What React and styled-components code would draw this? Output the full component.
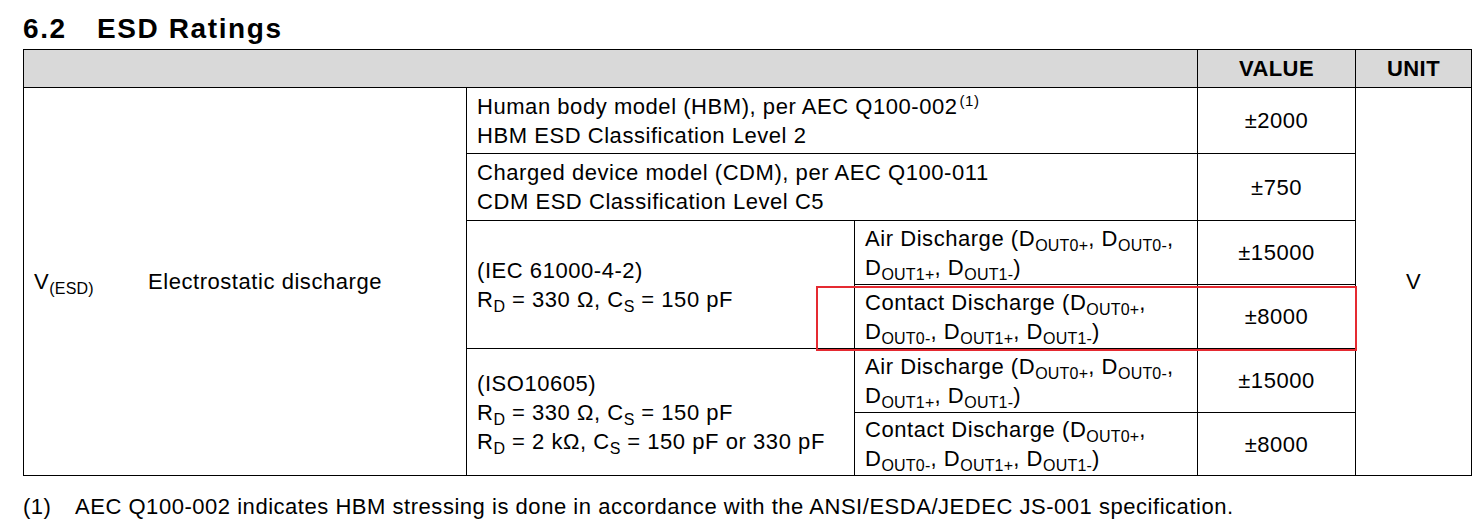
import React from 'react';
import styled, { createGlobalStyle } from 'styled-components';

const GlobalStyle = createGlobalStyle`
    body {
        margin: 0;
        background: #fff;
        color: #000;
        font-family: "Liberation Sans", Arial, sans-serif;
    }
`

const Page = styled.div`
    width: 1479px;
    padding: 13px 0 0 23px;
    box-sizing: border-box;
`

const Title = styled.h2`
    margin: 0 0 4px 0;
    font-size: 28px;
    line-height: 32px;
    font-weight: 700;
    letter-spacing: 1.6px;
`

const TitleNumber = styled.span`
    display: inline-block;
    width: 74px;
`

const TableWrap = styled.div`
    position: relative;
    width: 1448px;
`

const Table = styled.table`
    width: 1448px;
    border-collapse: collapse;
    table-layout: fixed;
    font-size: 22px;
    letter-spacing: 0.55px;
    line-height: 29px;
`

const HeadRow = styled.tr`
    height: 38px;
`

const Row = styled.tr`
    height: ${p => p.$h}px;
`

const Th = styled.th`
    background: #d9d9d9;
    border: 1px solid #000;
    font-size: 22px;
    letter-spacing: 0.4px;
    font-weight: 700;
    text-align: center;
    padding: 0;
`

const Td = styled.td`
    border: 1px solid #000;
    padding: 0 10px;
    vertical-align: middle;
    white-space: nowrap;
    text-align: ${p => (p.$center ? 'center' : 'left')};
`

const ParamCell = styled.div`
    display: flex;
    align-items: center;
`

const Symbol = styled.span`
    width: 114px;
`

const Sub = styled.sub`
    font-size: 16px;
    line-height: 0;
    vertical-align: -5px;
    letter-spacing: 0.2px;
`

const Sup = styled.sup`
    font-size: 15px;
    line-height: 0;
    vertical-align: 8px;
    margin-left: 2px;
`

const Highlight = styled.div`
    position: absolute;
    left: 793px;
    top: 237px;
    width: 541px;
    height: 65px;
    box-sizing: border-box;
    border: 2px solid #e52a31;
    pointer-events: none;
`

const Footnote = styled.p`
    margin: 18px 0 0 0;
    font-size: 22px;
    line-height: 26px;
    letter-spacing: 0.53px;
    display: flex;
`

const NoteMark = styled.span`
    width: 52px;
`

const D = ({ s }) => (
    <>D<Sub>{s}</Sub></>
);

const Air = () => (
    <>
        Air Discharge (<D s="OUT0+" />, <D s="OUT0-" />,<br />
        <D s="OUT1+" />, <D s="OUT1-" />)
    </>
);

const Contact = () => (
    <>
        Contact Discharge (<D s="OUT0+" />,<br />
        <D s="OUT0-" />, <D s="OUT1+" />, <D s="OUT1-" />)
    </>
);

const App = () => {
    return (
        <Page>
            <GlobalStyle />
            <Title><TitleNumber>6.2</TitleNumber>ESD Ratings</Title>
            <TableWrap>
                <Table>
                    <colgroup>
                        <col style={{ width: 443 }} />
                        <col style={{ width: 388 }} />
                        <col style={{ width: 343 }} />
                        <col style={{ width: 158 }} />
                        <col style={{ width: 116 }} />
                    </colgroup>
                    <thead>
                        <HeadRow>
                            <Th colSpan={3}></Th>
                            <Th>VALUE</Th>
                            <Th>UNIT</Th>
                        </HeadRow>
                    </thead>
                    <tbody>
                        <Row $h={66}>
                            <Td rowSpan={6}>
                                <ParamCell>
                                    <Symbol>V<Sub>(ESD)</Sub></Symbol>
                                    <span>Electrostatic discharge</span>
                                </ParamCell>
                            </Td>
                            <Td colSpan={2}>
                                Human body model (HBM), per AEC Q100-002<Sup>(1)</Sup><br />
                                HBM ESD Classification Level 2
                            </Td>
                            <Td $center>±2000</Td>
                            <Td rowSpan={6} $center>V</Td>
                        </Row>
                        <Row $h={67}>
                            <Td colSpan={2}>
                                Charged device model (CDM), per AEC Q100-011<br />
                                CDM ESD Classification Level C5
                            </Td>
                            <Td $center>±750</Td>
                        </Row>
                        <Row $h={64}>
                            <Td rowSpan={2}>
                                (IEC 61000-4-2)<br />
                                R<Sub>D</Sub> = 330 Ω, C<Sub>S</Sub> = 150 pF
                            </Td>
                            <Td><Air /></Td>
                            <Td $center>±15000</Td>
                        </Row>
                        <Row $h={64}>
                            <Td><Contact /></Td>
                            <Td $center>±8000</Td>
                        </Row>
                        <Row $h={64}>
                            <Td rowSpan={2}>
                                (ISO10605)<br />
                                R<Sub>D</Sub> = 330 Ω, C<Sub>S</Sub> = 150 pF<br />
                                R<Sub>D</Sub> = 2 kΩ, C<Sub>S</Sub> = 150 pF or 330 pF
                            </Td>
                            <Td><Air /></Td>
                            <Td $center>±15000</Td>
                        </Row>
                        <Row $h={63}>
                            <Td><Contact /></Td>
                            <Td $center>±8000</Td>
                        </Row>
                    </tbody>
                </Table>
                <Highlight />
            </TableWrap>
            <Footnote>
                <NoteMark>(1)</NoteMark>
                <span>AEC Q100-002 indicates HBM stressing is done in accordance with the ANSI/ESDA/JEDEC JS-001 specification.</span>
            </Footnote>
        </Page>
    );
};

export default App;
